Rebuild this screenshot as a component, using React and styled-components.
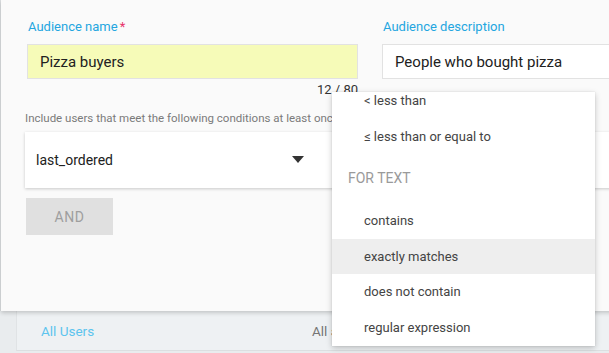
import React from "react";
import styled, { createGlobalStyle } from "styled-components";

const Global = createGlobalStyle`
  html, body { margin: 0; padding: 0; background: #e9ecee; }
  body { font-family: Roboto, "Liberation Sans", Arial, sans-serif; }
`;

const Stage = styled.div`
  position: relative;
  width: 609px;
  height: 353px;
  overflow: hidden;
  background: #e9ecee;
`;

const BackPage = styled.div`
  padding-top: 250px;
  padding-left: 16px;
`;

const ListCard = styled.div`
  height: 101px;
  background: #eef1f3;
  border-left: 1px solid #e0e3e5;
  border-bottom: 1px solid #dcdfe1;
  display: flex;
  align-items: flex-end;
  padding: 0 0 11px 24px;
  box-sizing: border-box;
`;

const ListCell = styled.div`
  font-size: 13.5px;
  width: ${(p) => p.$w || "auto"};
  color: ${(p) => (p.$link ? "#5cc4ee" : "#757575")};
`;

const Dialog = styled.div`
  position: absolute;
  left: 1px;
  top: 0;
  width: 680px;
  height: 311px;
  background: #fafafa;
  box-shadow: 0 2px 4px rgba(0, 0, 0, 0.18), -1px 0 0 rgba(0, 0, 0, 0.06);
  padding-left: 24px;
  box-sizing: border-box;
`;

const FieldRow = styled.div`
  display: grid;
  grid-template-columns: 331px 260px;
  column-gap: 24px;
  padding-top: 18px;
  padding-left: 2px;
`;

const Field = styled.div`
  display: flex;
  flex-direction: column;
`;

const Label = styled.label`
  font-size: 13px;
  color: #24a6e0;
  height: 18px;
  line-height: 18px;
  padding-left: 1px;
  margin-bottom: 8px;
`;

const Req = styled.span`
  color: #e8336a;
  margin-left: 2px;
`;

const Input = styled.div`
  height: 35px;
  box-sizing: border-box;
  border: 1px solid #e2e2e2;
  background: ${(p) => (p.$filled ? "#f6fbb8" : "#ffffff")};
  font-size: 15px;
  color: #212121;
  display: flex;
  align-items: center;
  padding-left: 12px;
  width: ${(p) => (p.$wide ? "260px" : "331px")};
`;

const Counter = styled.div`
  width: 331px;
  text-align: right;
  font-size: 13px;
  color: #333;
  margin-top: 3px;
  line-height: 16px;
`;

const Helper = styled.div`
  font-size: 11.5px;
  color: #7a7a7a;
  margin-top: 12px;
  line-height: 16px;
  white-space: nowrap;
`;

const SelectCard = styled.div`
  margin-top: 6px;
  height: 56px;
  background: #fff;
  box-shadow: 0 1px 3px rgba(0, 0, 0, 0.2);
  display: flex;
  align-items: center;
  padding-left: 11px;
  font-size: 14px;
  color: #212121;
`;

const SelectText = styled.span`
  width: 256px;
`;

const AndButton = styled.button`
  margin-top: 10px;
  margin-left: 1px;
  width: 87px;
  height: 37px;
  border: none;
  background: #e0e0e0;
  color: #9e9e9e;
  font-family: inherit;
  font-size: 14px;
  letter-spacing: 0.5px;
  display: block;
`;

const Menu = styled.div`
  position: absolute;
  left: 332px;
  top: 92px;
  width: 263px;
  height: 254px;
  background: #fff;
  box-shadow: 0 2px 6px rgba(0, 0, 0, 0.22), 0 0 1px rgba(0, 0, 0, 0.15);
  overflow: hidden;
`;

const MenuList = styled.div`
  margin-top: -9px;
`;

const Item = styled.div`
  height: 35.6px;
  line-height: 35.6px;
  padding-left: 32px;
  font-size: 13px;
  color: #444;
  background: ${(p) => (p.$active ? "#eeeeee" : "transparent")};
`;

const Header = styled.div`
  height: 49px;
  line-height: 49px;
  padding-left: 16px;
  font-size: 14px;
  color: #9a9a9a;
  text-transform: uppercase;
`;

const Arrow = () => (
  <svg width="12" height="8" viewBox="0 0 12 8">
    <polygon points="0,0 12,0 6,7" fill="#333" />
  </svg>
);

export default function App() {
  return (
    <>
      <Global />
      <Stage>
        <BackPage>
          <ListCard>
            <ListCell $link $w="271px">All Users</ListCell>
            <ListCell>All active users</ListCell>
          </ListCard>
        </BackPage>
        <Dialog>
          <FieldRow>
            <Field>
              <Label>
                Audience name<Req>*</Req>
              </Label>
              <Input $filled>Pizza buyers</Input>
              <Counter>12 / 80</Counter>
            </Field>
            <Field>
              <Label>Audience description</Label>
              <Input $wide>People who bought pizza</Input>
            </Field>
          </FieldRow>
          <Helper>
            Include users that meet the following conditions at least once from the selected date range
          </Helper>
          <SelectCard>
            <SelectText>last_ordered</SelectText>
            <Arrow />
          </SelectCard>
          <AndButton>AND</AndButton>
        </Dialog>
        <Menu>
          <MenuList>
            <Item>&lt; less than</Item>
            <Item>≤ less than or equal to</Item>
            <Header>For text</Header>
            <Item>contains</Item>
            <Item $active>exactly matches</Item>
            <Item>does not contain</Item>
            <Item>regular expression</Item>
          </MenuList>
        </Menu>
      </Stage>
    </>
  );
}
